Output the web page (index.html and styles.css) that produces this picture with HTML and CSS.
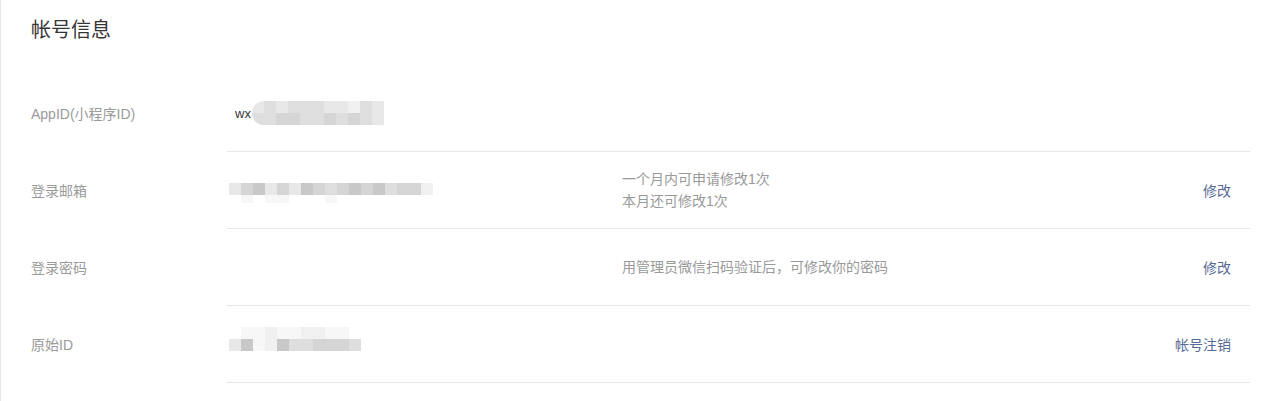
FILE: index.html
```html
<!DOCTYPE html>
<html lang="zh-CN">
<head>
<meta charset="utf-8">
<title>帐号信息</title>
<link rel="stylesheet" href="styles.css">
</head>
<body>
<div class="page">
  <h2 class="title">帐号信息</h2>
  <div class="list">
    <div class="row">
      <div class="label">AppID(小程序ID)</div>
      <div class="main">
        <div class="value value-appid"><span class="wx">wx</span>
          <div class="blur blur-appid">
            <span class="c a"></span><span class="c b"></span><span class="c a"></span><span class="c b"></span><span class="c b"></span><span class="c b"></span><span class="c a"></span><span class="c a"></span><span class="c z"></span><span class="c b"></span><span class="c a"></span>
            <span class="c b"></span><span class="c b"></span><span class="c c2"></span><span class="c c2"></span><span class="c b"></span><span class="c b"></span><span class="c c2"></span><span class="c b"></span><span class="c c2"></span><span class="c b"></span><span class="c a"></span>
          </div>
        </div>
        <div class="desc"></div>
        <div class="action"></div>
      </div>
    </div>
    <div class="row">
      <div class="label">登录邮箱</div>
      <div class="main">
        <div class="value">
          <div class="blur blur-mail">
            <span class="c a"></span><span class="c c2"></span><span class="c d"></span><span class="c a"></span><span class="c c2"></span><span class="c a"></span><span class="c d"></span><span class="c c2"></span><span class="c b"></span><span class="c c2"></span><span class="c d"></span><span class="c c2"></span><span class="c d"></span><span class="c b"></span><span class="c c2"></span><span class="c c2"></span><span class="c z"></span>
            <span class="c n"></span><span class="c f"></span><span class="c n"></span><span class="c f"></span><span class="c f"></span><span class="c n"></span><span class="c n"></span><span class="c n"></span><span class="c f"></span><span class="c n"></span><span class="c n"></span><span class="c n"></span><span class="c n"></span><span class="c n"></span><span class="c n"></span><span class="c n"></span><span class="c n"></span>
          </div>
        </div>
        <div class="desc">
          <p>一个月内可申请修改1次</p>
          <p>本月还可修改1次</p>
        </div>
        <div class="action"><a href="#">修改</a></div>
      </div>
    </div>
    <div class="row">
      <div class="label">登录密码</div>
      <div class="main">
        <div class="value"></div>
        <div class="desc"><p>用管理员微信扫码验证后，可修改你的密码</p></div>
        <div class="action"><a href="#">修改</a></div>
      </div>
    </div>
    <div class="row">
      <div class="label">原始ID</div>
      <div class="main">
        <div class="value">
          <div class="blur blur-orig">
            <span class="c n"></span><span class="c f"></span><span class="c f"></span><span class="c z"></span><span class="c f"></span><span class="c f"></span><span class="c z"></span><span class="c z"></span><span class="c f"></span><span class="c f"></span><span class="c n"></span>
            <span class="c a"></span><span class="c d"></span><span class="c f"></span><span class="c z"></span><span class="c d"></span><span class="c b"></span><span class="c b"></span><span class="c c2"></span><span class="c c2"></span><span class="c c2"></span><span class="c b"></span>
          </div>
        </div>
        <div class="desc"></div>
        <div class="action"><a href="#">帐号注销</a></div>
      </div>
    </div>
  </div>
</div>
</body>
</html>
```

FILE: styles.css
```css
* { box-sizing: border-box; }
html, body { margin: 0; padding: 0; background: #fff; }
body {
  font-family: "Liberation Sans", "Noto Sans CJK SC", sans-serif;
  color: #353535;
  font-size: 14px;
}
.page {
  border-left: 1px solid #e7e7e7;
  min-height: 401px;
  padding: 0 28px 0 30px;
}
.title {
  margin: 0;
  padding-top: 16px;
  height: 75px;
  font-size: 20px;
  line-height: 28px;
  font-weight: normal;
  color: #353535;
}
.row {
  display: flex;
  height: 77px;
}
.label {
  width: 196px;
  flex: none;
  display: flex;
  align-items: center;
  color: #9a9a9a;
  padding-bottom: 1px;
}
.main {
  flex: 1;
  display: flex;
  align-items: center;
  border-bottom: 1px solid #e7e7e7;
}
.value {
  width: 395px;
  flex: none;
  display: flex;
  align-items: center;
}
.value-appid { padding-left: 8px; }
.wx { color: #353535; font-size: 13px; }
.desc {
  flex: 1;
  color: #9a9a9a;
  line-height: 22px;
}
.desc p { margin: 0; }
.action {
  padding-right: 19px;
}
.action a {
  color: #576b95;
  text-decoration: none;
}
.blur {
  display: grid;
  grid-auto-rows: 12px;
}
.blur-appid {
  grid-template-columns: repeat(11, 12px);
  border-radius: 12px 0 0 12px;
  overflow: hidden;
  margin-left: 1px;
}
.blur-mail {
  grid-template-columns: repeat(17, 12px);
  margin-left: 2px;
  margin-top: 6px;
  grid-auto-rows: 12px 8px;
}
.blur-orig {
  grid-template-columns: repeat(11, 12px);
  margin-left: 2px;
  margin-top: -10px;
}
.c { display: block; }
.n { background: #fff; }
.f { background: #f7f7f7; }
.z { background: #f0f0f0; }
.a { background: #e8e8e8; }
.b { background: #dedede; }
.c2 { background: #d5d5d5; }
.d { background: #c8c8c8; }
```
